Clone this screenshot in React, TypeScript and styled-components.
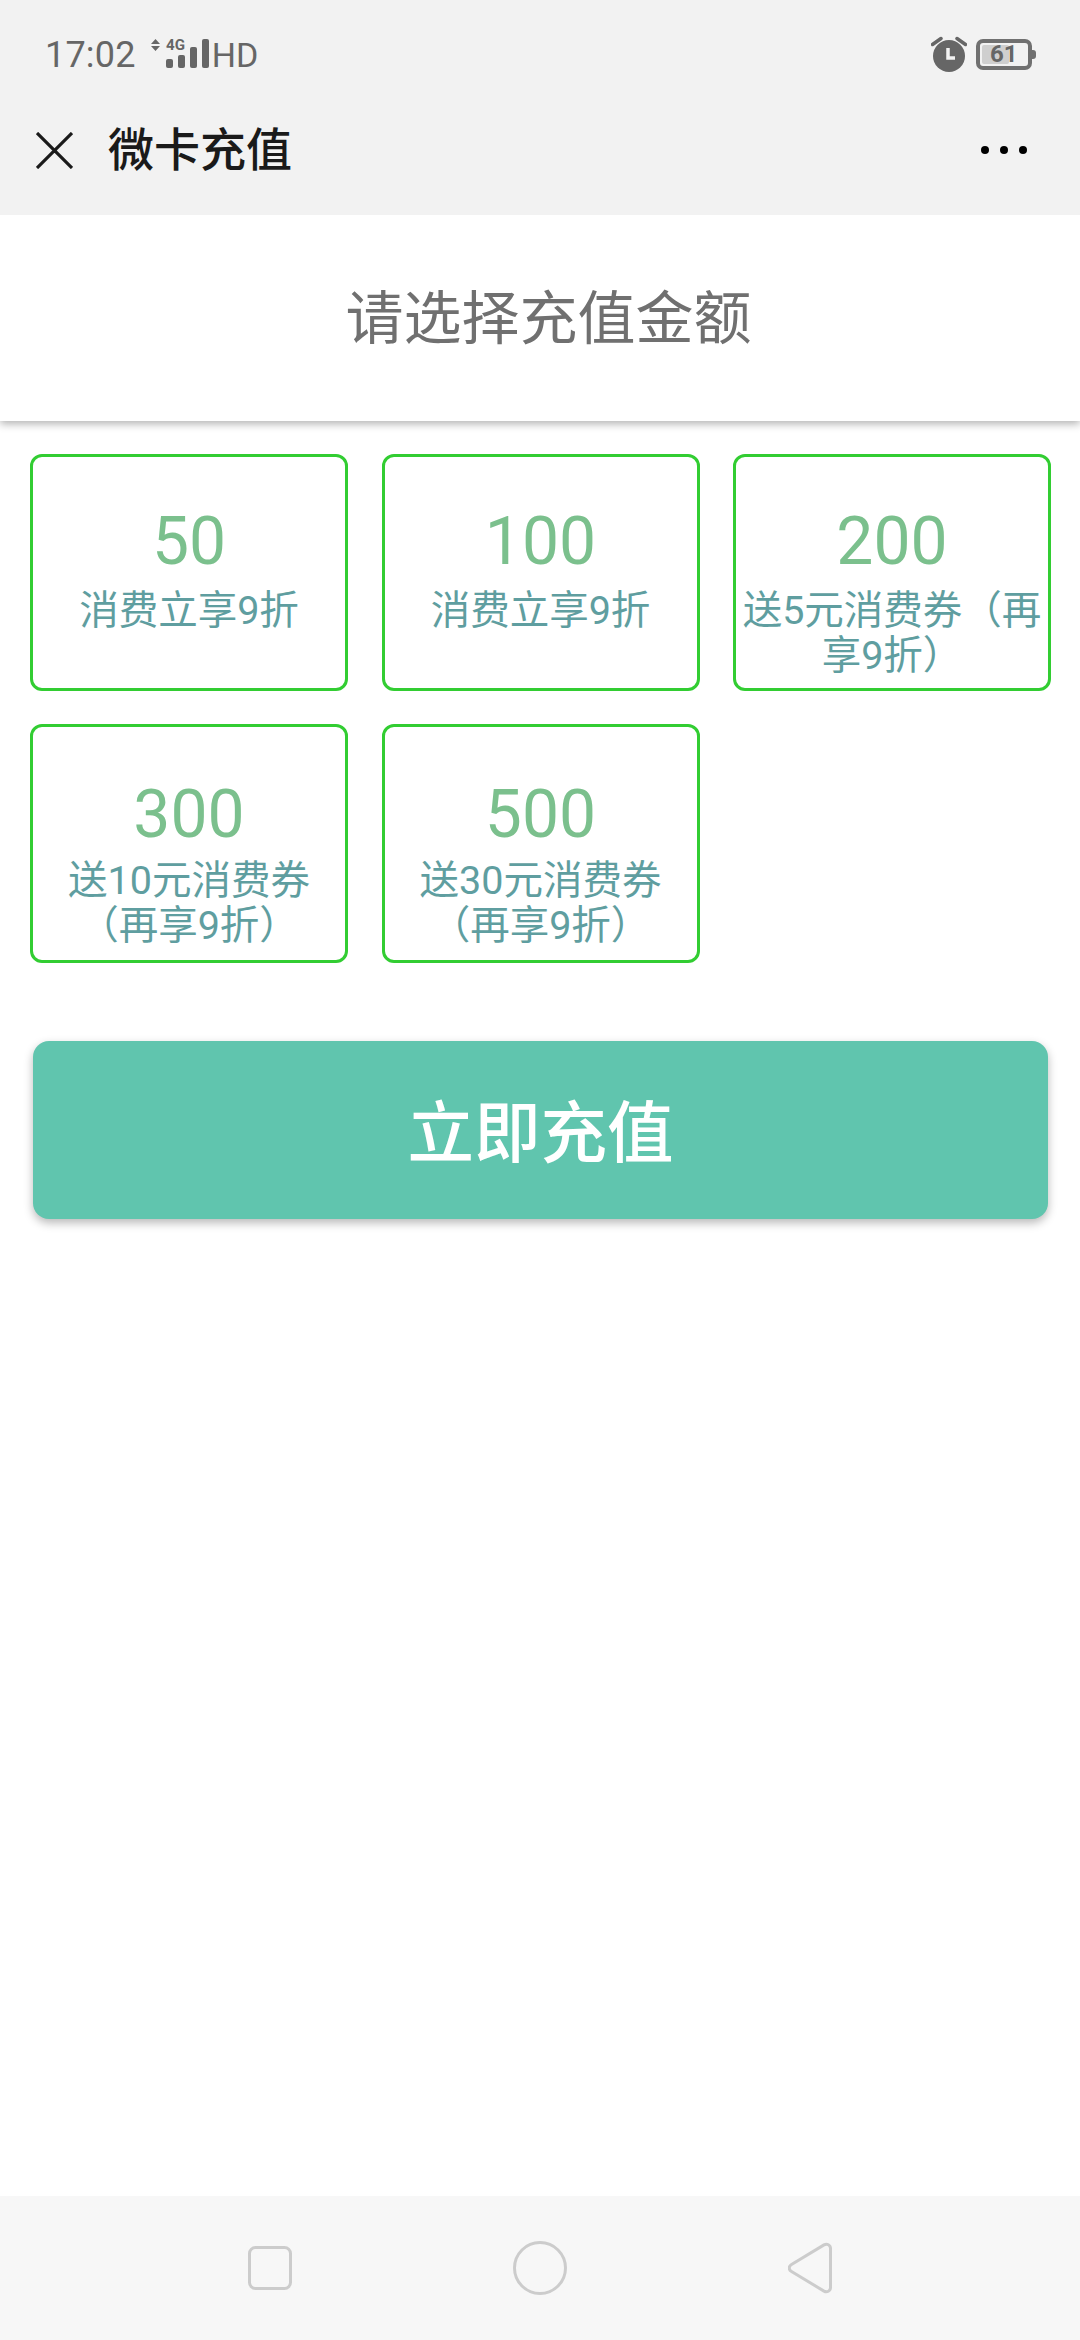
import React from "react";
import styled, { createGlobalStyle } from "styled-components";

const Global = createGlobalStyle`
  html, body { margin: 0; padding: 0; background: #fff; }
  * { box-sizing: border-box; }
  #root { width: 1080px; height: 2340px; }
`;

const FONT = `Roboto, "Noto Sans CJK SC", sans-serif`;

const Page = styled.div`
  width: 1080px;
  height: 2340px;
  display: flex;
  flex-direction: column;
  font-family: ${FONT};
  background: #fff;
  overflow: hidden;
`;

const StatusBar = styled.div`
  height: 108px;
  background: #f2f2f2;
  display: flex;
  align-items: center;
  padding: 0 44px 0 45px;
  color: #666;
`;
const Time = styled.span`
  font-size: 36px;
  line-height: 36px;
  letter-spacing: 0.2px;
  margin-top: 2px;
`;
const Net = styled.div`
  display: flex;
  align-items: center;
  margin-left: 13px;
`;
const Hd = styled.span`
  font-size: 34px;
  line-height: 36px;
  margin-left: -3px;
  margin-top: 2px;
`;
const StatusRight = styled.div`
  margin-left: auto;
  display: flex;
  align-items: center;
  gap: 9px;
`;
const Battery = styled.div`
  position: relative;
  width: 56px;
  height: 31px;
  border: 4px solid #707070;
  border-radius: 7px;
  margin-right: 4px;
  margin-top: 1px;
  &::before {
    content: "";
    position: absolute;
    left: 2px;
    top: 2px;
    bottom: 2px;
    width: 27px;
    background: #cfcfcf;
    border-radius: 2px;
  }
  &::after {
    content: "";
    position: absolute;
    right: -8px;
    top: 7px;
    width: 4px;
    height: 9px;
    background: #707070;
    border-radius: 0 3px 3px 0;
  }
`;
const BatteryLabel = styled.span`
  position: absolute;
  left: 10px;
  top: -1px;
  font-size: 24px;
  line-height: 25px;
  font-weight: 700;
  color: #666;
`;

const Toolbar = styled.div`
  height: 107px;
  background: #f2f2f2;
  padding: 0 53px 23px 36px;
  display: flex;
  align-items: center;
  position: relative;
  z-index: 1;
`;
const PageTitle = styled.h1`
  margin: 0 0 0 35px;
  font-size: 46px;
  line-height: 60px;
  font-weight: 500;
  color: #1a1a1a;
`;
const Dots = styled.div`
  margin-left: auto;
  display: flex;
  gap: 11px;
`;
const Dot = styled.i`
  width: 8px;
  height: 8px;
  border-radius: 50%;
  background: #000;
`;

const Heading = styled.div`
  height: 206px;
  background: #fff;
  display: flex;
  align-items: center;
  justify-content: center;
  padding: 0 0 8px 17px;
  font-size: 58px;
  color: #707070;
  box-shadow: 0 3px 8px rgba(0, 0, 0, 0.3);
  position: relative;
`;

const Main = styled.div`
  flex: 1;
  padding: 33px 30px 0;
`;
const Grid = styled.div`
  display: grid;
  grid-template-columns: repeat(3, 318px);
  grid-template-rows: 237px 239px;
  column-gap: 33.5px;
  row-gap: 33px;
`;
const Card = styled.div`
  border: 3px solid #32cd32;
  border-radius: 12px;
  padding: 49px 0 0;
  display: flex;
  flex-direction: column;
  align-items: center;
  text-align: center;
  overflow: hidden;
`;
const Amount = styled.div<{ $low?: boolean }>`
  font-size: 66px;
  line-height: 72px;
  color: #7bc08d;
  margin-top: ${(p) => (p.$low ? "3px" : "0")};
`;
const Note = styled.div<{ $low?: boolean }>`
  font-size: 39.5px;
  line-height: 44.5px;
  color: #5f9ea0;
  margin-top: ${(p) => (p.$low ? "8px" : "11px")};
`;
const PayButton = styled.button`
  display: block;
  width: 1015px;
  height: 178px;
  margin: 78px 0 0 3px;
  padding: 0 0 5px;
  border: 0;
  border-radius: 16px;
  background: #60c5ae;
  color: #fff;
  font-family: ${FONT};
  font-size: 66.5px;
  font-weight: 500;
  box-shadow: 0 4px 10px rgba(0, 0, 0, 0.28);
`;

const NavBar = styled.div`
  height: 144px;
  background: #f7f7f7;
  display: grid;
  grid-template-columns: repeat(3, 270px);
  justify-content: center;
  align-items: center;
  justify-items: center;
`;

const plans = [
  { amount: "50", note: "消费立享9折", low: false },
  { amount: "100", note: "消费立享9折", low: false },
  { amount: "200", note: "送5元消费券（再享9折）", low: false },
  { amount: "300", note: "送10元消费券（再享9折）", low: true },
  { amount: "500", note: "送30元消费券（再享9折）", low: true },
];

export default function App() {
  return (
    <Page>
      <Global />
      <StatusBar>
        <Time>17:02</Time>
        <Net>
          <svg width="66" height="36" viewBox="0 -2 66 36">
            <path d="M6.5 1l4.5 5H2zM6.5 13L11 8H2z" fill="#666" />
            <text x="17" y="12" fontFamily="Roboto" fontWeight="700" fontSize="15" textLength="19" lengthAdjust="spacingAndGlyphs" fill="#666">4G</text>
            <rect x="17" y="21" width="7" height="9" rx="2" fill="#666" />
            <rect x="29" y="17" width="7" height="13" rx="2" fill="#666" />
            <rect x="41" y="9" width="7" height="21" rx="2" fill="#666" />
            <rect x="53" y="1" width="7" height="29" rx="2" fill="#666" />
          </svg>
          <Hd>HD</Hd>
        </Net>
        <StatusRight>
          <svg width="36" height="36" viewBox="0 0 36 36">
            <circle cx="18" cy="20" r="16" fill="#666" />
            <path d="M1.5 8.5L10 2.5M34.5 8.5L26 2.5" stroke="#666" strokeWidth="3.5" strokeLinecap="round" />
            <path d="M17 12v10h7" stroke="#f2f2f2" strokeWidth="3.5" fill="none" />
          </svg>
          <Battery>
            <BatteryLabel>61</BatteryLabel>
          </Battery>
        </StatusRight>
      </StatusBar>
      <Toolbar>
        <svg width="37" height="37" viewBox="0 0 37 37">
          <path d="M1 1l35 35M36 1L1 36" stroke="#1a1a1a" strokeWidth="3.2" />
        </svg>
        <PageTitle>微卡充值</PageTitle>
        <Dots>
          <Dot />
          <Dot />
          <Dot />
        </Dots>
      </Toolbar>
      <Heading>请选择充值金额</Heading>
      <Main>
        <Grid>
          {plans.map((p) => (
            <Card key={p.amount}>
              <Amount $low={p.low}>{p.amount}</Amount>
              <Note $low={p.low}>{p.note}</Note>
            </Card>
          ))}
        </Grid>
        <PayButton>立即充值</PayButton>
      </Main>
      <NavBar>
        <svg width="44" height="44" viewBox="0 0 44 44">
          <rect x="1.5" y="1.5" width="41" height="41" rx="6" fill="none" stroke="#ccc" strokeWidth="3" />
        </svg>
        <svg width="54" height="54" viewBox="0 0 54 54">
          <circle cx="27" cy="27" r="25.5" fill="none" stroke="#ccc" strokeWidth="3" />
        </svg>
        <svg width="44" height="52" viewBox="0 0 44 52">
          <path d="M3.5 22.5L36 2.9c3-1.6 6.5 0 6.5 3.5v39.2c0 3.5-3.5 5.1-6.5 3.5L3.5 29.5c-3-1.8-3-5.2 0-7z" fill="none" stroke="#ccc" strokeWidth="3" />
        </svg>
      </NavBar>
    </Page>
  );
}
